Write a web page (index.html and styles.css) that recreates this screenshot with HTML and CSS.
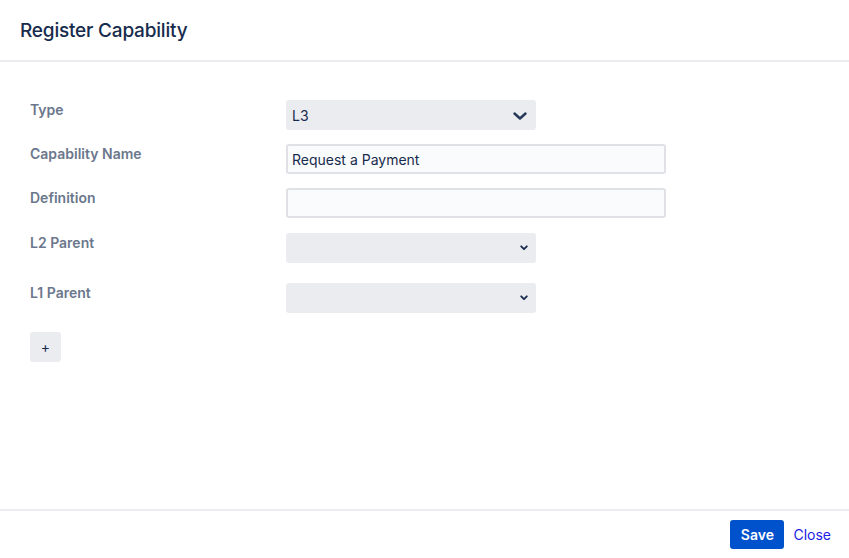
FILE: index.html
```html
<!DOCTYPE html>
<html lang="en">
<head>
<meta charset="utf-8">
<title>Register Capability</title>
<link rel="stylesheet" href="styles.css">
</head>
<body>
<div class="dialog">
  <header class="dialog-header">
    <h1 class="dialog-title">Register Capability</h1>
  </header>
  <main class="dialog-body">
    <div class="form-row row-type">
      <label class="field-label">Type</label>
      <div class="select select-lg">
        <span class="select-value">L3</span>
        <svg class="chev-lg" width="14" height="8" viewBox="0 0 14 8"><path d="M1.5 1.5 L7 6.5 L12.5 1.5" fill="none" stroke="#253858" stroke-width="2.4" stroke-linecap="round" stroke-linejoin="round"/></svg>
      </div>
    </div>
    <div class="form-row row-name">
      <label class="field-label">Capability Name</label>
      <div class="text-input"><span class="input-value">Request a Payment</span></div>
    </div>
    <div class="form-row row-def">
      <label class="field-label">Definition</label>
      <div class="text-input"></div>
    </div>
    <div class="form-row row-l2">
      <label class="field-label">L2 Parent</label>
      <div class="select">
        <span class="select-value"></span>
        <svg class="chev-sm" width="8" height="6" viewBox="0 0 8 6"><path d="M1.2 1.3 L4 4.2 L6.8 1.3" fill="none" stroke="#172b4d" stroke-width="1.8" stroke-linecap="round" stroke-linejoin="round"/></svg>
      </div>
    </div>
    <div class="form-row row-l1">
      <label class="field-label">L1 Parent</label>
      <div class="select">
        <span class="select-value"></span>
        <svg class="chev-sm" width="8" height="6" viewBox="0 0 8 6"><path d="M1.2 1.3 L4 4.2 L6.8 1.3" fill="none" stroke="#172b4d" stroke-width="1.8" stroke-linecap="round" stroke-linejoin="round"/></svg>
      </div>
    </div>
    <button class="add-btn">+</button>
  </main>
  <footer class="dialog-footer">
    <button class="save-btn">Save</button>
    <a class="close-link" href="#">Close</a>
  </footer>
</div>
</body>
</html>
```
FILE: styles.css
```css
* { box-sizing: border-box; }
html, body { margin: 0; padding: 0; background: #fff; }
body {
  font-family: Inter, "Noto Sans", "Liberation Sans", sans-serif;
  color: #172b4d;
  width: 849px;
  height: 558px;
  overflow: hidden;
}
.dialog {
  display: flex;
  flex-direction: column;
  height: 558px;
}
.dialog-header {
  height: 62px;
  border-bottom: 2px solid #ebecf0;
  padding: 0 20px;
  display: flex;
  align-items: center;
}
.dialog-title {
  margin: 0;
  font-size: 19px;
  font-weight: 500;
  color: #172b4d;
  letter-spacing: -0.2px;
}
.dialog-body {
  flex: 1;
  padding: 38px 30px 0;
  display: flex;
  flex-direction: column;
  align-items: flex-start;
}
.form-row {
  display: flex;
  align-items: flex-start;
}
.field-label {
  width: 256px;
  font-size: 14px;
  font-weight: 600;
  color: #6b778c;
  line-height: 18px;
  padding-top: 1px;
}
.row-type { margin-bottom: 14px; }
.row-name { margin-bottom: 14px; }
.row-def { margin-bottom: 15px; }
.row-l2 { margin-bottom: 20px; }
.row-l1 { margin-bottom: 19px; }
.select {
  width: 250px;
  height: 30px;
  background: #ebecf0;
  border-radius: 3px;
  display: flex;
  align-items: center;
  justify-content: space-between;
  padding: 0 7px 0 6px;
}
.select-lg { padding-right: 9px; }
.select-value {
  font-size: 14px;
  color: #172b4d;
}
.chev-lg { display: block; margin-top: 1px; }
.chev-sm { display: block; margin-right: 1px; }
.text-input {
  width: 380px;
  height: 30px;
  background: #fafbfc;
  border: 2px solid #dfe1e6;
  border-radius: 3px;
  display: flex;
  align-items: center;
  padding: 0 4px;
}
.input-value {
  font-size: 14px;
  color: #172b4d;
}
.add-btn {
  width: 31px;
  height: 30px;
  border: none;
  border-radius: 3px;
  background: #ebecf0;
  color: #172b4d;
  font-family: inherit;
  font-size: 14px;
  padding: 0;
  line-height: 30px;
}
.dialog-footer {
  height: 49px;
  border-top: 2px solid #ebecf0;
  display: flex;
  align-items: center;
  justify-content: flex-end;
  padding: 0 18px 0 0;
  gap: 9px;
}
.save-btn {
  width: 54px;
  height: 29px;
  background: #0052cc;
  color: #fff;
  border: none;
  border-radius: 3px;
  font-family: inherit;
  font-size: 14px;
  font-weight: 600;
  padding: 0;
}
.close-link {
  font-size: 14px;
  color: #2121e6;
  text-decoration: none;
}
```
